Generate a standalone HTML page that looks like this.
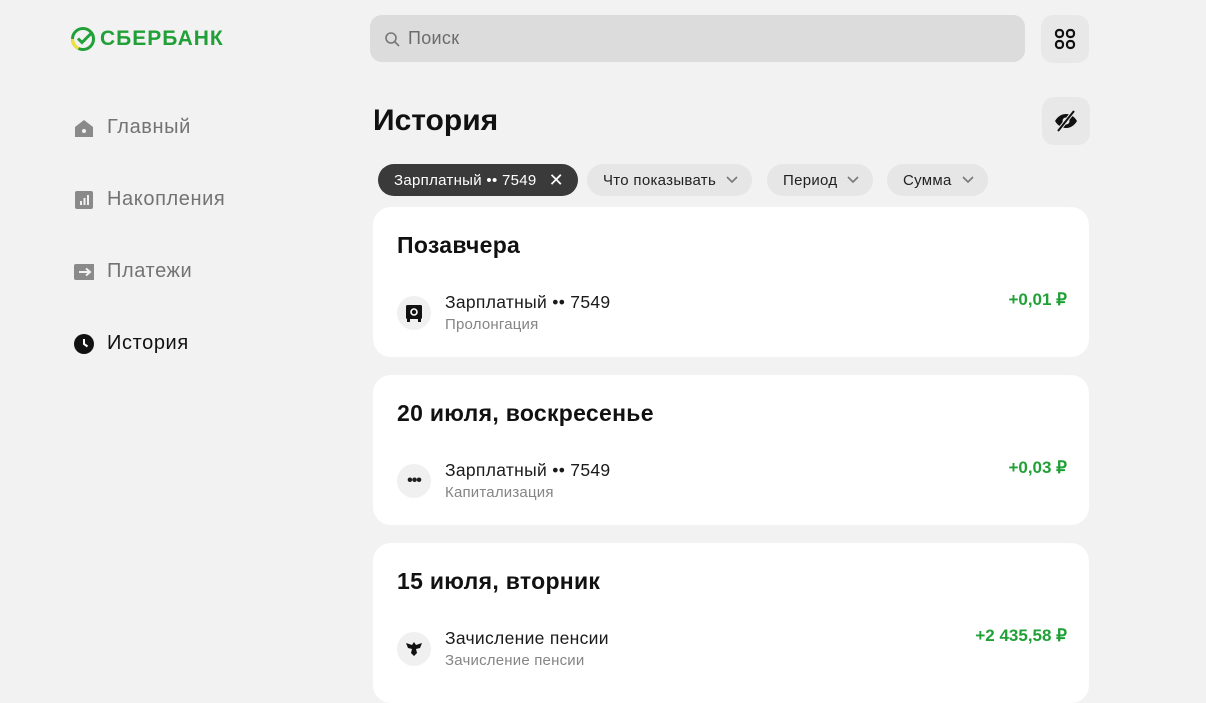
<!DOCTYPE html>
<html><head><meta charset="utf-8"><style>
*{margin:0;padding:0;box-sizing:border-box}
body{width:1206px;height:678px;overflow:hidden;background:#f2f2f2;font-family:"Liberation Sans","Noto Sans CJK SC",sans-serif;color:#1f1f1f;position:relative}
.abs{position:absolute}
.logo{left:70px;top:26px;display:flex;align-items:center;gap:4px;color:#21a038;font-weight:bold;font-size:21px;letter-spacing:1px}
.nav{left:74px;display:flex;align-items:center;gap:13px;font-size:20px;color:#737373;letter-spacing:0.6px}
.nav .ic{width:20px;height:20px;display:flex;align-items:center;justify-content:center}
.search{left:370px;top:15px;width:655px;height:47px;background:#dcdcdc;border-radius:12px;display:flex;align-items:center;padding-left:14px;gap:8px;color:#6b6b6b;font-size:18px;letter-spacing:0.3px}
.sq{width:48px;height:48px;background:#e8e8e8;border-radius:12px;display:flex;align-items:center;justify-content:center}
h1{position:absolute;left:373px;top:104px;font-size:30px;font-weight:bold;color:#111}
.chip{top:164px;height:32px;border-radius:16px;background:#e6e6e6;display:flex;align-items:center;padding:0 14px 0 16px;font-size:15px;gap:10px;color:#222;letter-spacing:0.3px}
.card{left:373px;width:716px;background:#fff;border-radius:18px}
.card h2{position:absolute;left:24px;font-size:23px;font-weight:bold;color:#111;letter-spacing:0.3px}
.row{position:absolute;left:24px;right:22px;display:flex;align-items:center}
.ri{width:34px;height:34px;border-radius:50%;background:#f0f0f0;display:flex;align-items:center;justify-content:center;margin-right:14px}
.t1{font-size:17.5px;color:#1a1a1a;letter-spacing:0.3px}
.t2{font-size:15px;color:#858585;margin-top:3px;letter-spacing:0.2px}
.amt{margin-left:auto;color:#21a038;font-size:17px;align-self:flex-start;margin-top:-2px;font-weight:bold}
</style></head><body>
<div class="abs logo"><svg width="26" height="26" viewBox="0 0 26 26"><circle cx="13" cy="13" r="10.5" fill="none" stroke="#21a038" stroke-width="3"/><path d="M2.5 13a10.5 10.5 0 0 0 6 9.5" stroke="#f2e03a" stroke-width="3" fill="none"/><path d="M8 12.5l4 4 9-9" stroke="#21a038" stroke-width="3" fill="none"/></svg>СБЕРБАНК</div>

<div class="abs nav" style="top:116px"><span class="ic"><svg width="20" height="18"><path d="M1 8L10 1l9 7v10H1z" fill="#8a8a8a"/><circle cx="10" cy="12" r="2" fill="#f2f2f2"/></svg></span>Главный</div>
<div class="abs nav" style="top:188px"><span class="ic"><svg width="18" height="18"><rect width="18" height="18" rx="2" fill="#8a8a8a"/><rect x="5" y="10" width="2" height="4" fill="#f2f2f2"/><rect x="8.5" y="7" width="2" height="7" fill="#f2f2f2"/><rect x="12" y="4" width="2" height="10" fill="#f2f2f2"/></svg></span>Накопления</div>
<div class="abs nav" style="top:260px"><span class="ic"><svg width="22" height="16"><rect width="22" height="16" rx="2" fill="#8a8a8a"/><path d="M5 8h11M12 4.5L16 8l-4 3.5" stroke="#f2f2f2" stroke-width="2" fill="none"/></svg></span>Платежи</div>
<div class="abs nav" style="top:332px;color:#111"><span class="ic"><svg width="20" height="20"><circle cx="10" cy="10" r="10" fill="#111"/><path d="M10 5v5l3.5 2.5" stroke="#fff" stroke-width="2" fill="none"/></svg></span>История</div>

<div class="abs search"><svg width="16" height="16"><circle cx="7" cy="7" r="5" stroke="#777" stroke-width="1.6" fill="none"/><path d="M11 11l4 4" stroke="#777" stroke-width="1.6"/></svg>Поиск</div>
<div class="abs sq" style="left:1041px;top:15px"><svg width="22" height="22"><g fill="none" stroke="#111" stroke-width="2.2"><rect x="2" y="2" width="7" height="7" rx="3"/><rect x="13" y="2" width="7" height="7" rx="3"/><rect x="2" y="13" width="7" height="7" rx="3"/><rect x="13" y="13" width="7" height="7" rx="3"/></g></svg></div>
<div class="abs sq" style="left:1042px;top:97px"><svg width="26" height="22"><path d="M2 11c3-5 7-7 11-7s8 2 11 7c-3 5-7 7-11 7s-8-2-11-7z" fill="#111"/><circle cx="13" cy="11" r="3.5" fill="#e8e8e8"/><path d="M21 1L5 21" stroke="#e8e8e8" stroke-width="4"/><path d="M21 1L5 21" stroke="#111" stroke-width="2"/></svg></div>

<h1>История</h1>
<div class="abs chip" style="left:378px;width:200px;background:#3a3a3a;color:#fff">Зарплатный •• 7549 <span style="font-size:18px;margin-left:auto">✕</span></div>
<div class="abs chip" style="left:587px">Что показывать <svg width="12" height="8"><path d="M1 1l5 5 5-5" stroke="#777" stroke-width="1.6" fill="none"/></svg></div>
<div class="abs chip" style="left:767px">Период <svg width="12" height="8"><path d="M1 1l5 5 5-5" stroke="#777" stroke-width="1.6" fill="none"/></svg></div>
<div class="abs chip" style="left:887px">Сумма <svg width="12" height="8"><path d="M1 1l5 5 5-5" stroke="#777" stroke-width="1.6" fill="none"/></svg></div>

<div class="abs card" style="top:207px;height:150px"><h2 style="top:25px">Позавчера</h2>
<div class="row" style="top:85px"><div class="ri"><svg width="18" height="18"><rect x="1" y="1" width="16" height="14" rx="1.5" fill="#111"/><circle cx="9" cy="8" r="3" fill="none" stroke="#fff" stroke-width="1.6"/><rect x="2" y="15" width="3" height="3" fill="#111"/><rect x="13" y="15" width="3" height="3" fill="#111"/></svg></div><div><div class="t1">Зарплатный •• 7549</div><div class="t2">Пролонгация</div></div><div class="amt">+0,01 ₽</div></div></div>

<div class="abs card" style="top:375px;height:150px"><h2 style="top:25px">20 июля, воскресенье</h2>
<div class="row" style="top:85px"><div class="ri" style="font-weight:bold;font-size:16px;letter-spacing:-1px">•••</div><div><div class="t1">Зарплатный •• 7549</div><div class="t2">Капитализация</div></div><div class="amt">+0,03 ₽</div></div></div>

<div class="abs card" style="top:543px;height:160px"><h2 style="top:25px">15 июля, вторник</h2>
<div class="row" style="top:85px"><div class="ri"><svg width="20" height="20"><path d="M10 3l2 3 6-2-2 5-4 1 1 4-3 3-3-3 1-4-4-1-2-5 6 2z" fill="#111"/></svg></div><div><div class="t1">Зачисление пенсии</div><div class="t2">Зачисление пенсии</div></div><div class="amt">+2 435,58 ₽</div></div></div>
</body></html>
